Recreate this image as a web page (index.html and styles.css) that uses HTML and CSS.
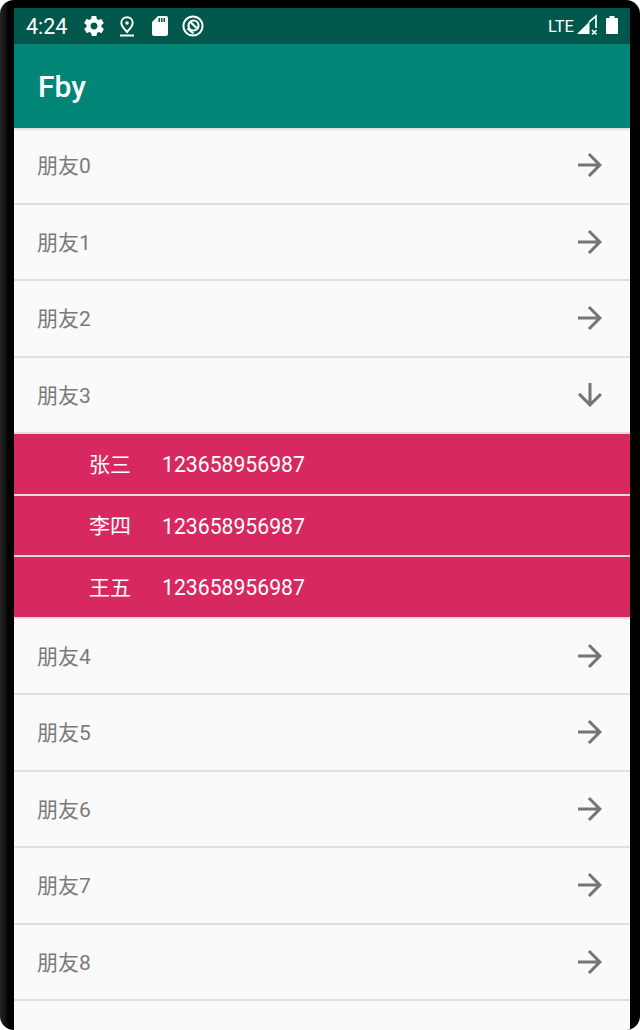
FILE: index.html
```html
<!DOCTYPE html>
<html>
<head>
    <title>Fby</title>
    <link rel="stylesheet" href="styles.css">
</head>
<body>
    <div class="device">
        <div class="screen">
            <div class="status-bar">
                <span class="time">4:24</span>
                <svg class="st-icon" viewBox="0 0 24 24"><path d="M19.400 13c0-.3.100-.6.100-1s0-.7-.1-1l2.100-1.600c.2-.2.2-.4.1-.6l-2-3.500c-.1-.2-.4-.3-.6-.2l-2.500 1c-.5-.4-1.100-.7-1.700-1l-.4-2.600C14.400 2.200 14.200 2 14 2h-4c-.2 0-.4.2-.5.4l-.4 2.600c-.6.300-1.200.6-1.700 1l-2.500-1c-.2-.1-.5 0-.6.2l-2 3.500c-.1.200-.1.400.1.600L4.600 11c0 .3-.1.700-.1 1s0 .7.1 1l-2.100 1.600c-.2.200-.2.400-.1.600l2 3.500c.1.200.4.300.6.200l2.500-1c.5.400 1.100.7 1.700 1l.4 2.600c.1.300.3.500.5.500h4c.2 0 .4-.2.5-.4l.4-2.600c.6-.3 1.200-.6 1.700-1l2.500 1c.2.100.5 0 .6-.2l2-3.500c.1-.2.100-.4-.1-.6L19.400 13zM12 15.500c-1.900 0-3.500-1.600-3.500-3.500s1.600-3.500 3.500-3.500 3.500 1.600 3.500 3.500-1.600 3.500-3.500 3.500z"/></svg>
                <svg class="st-icon" viewBox="0 0 24 24"><path class="line" d="M12 3.200c-3.300 0-5.700 2.500-5.700 5.600 0 3.500 3.500 6.900 5.700 9.200 2.200-2.300 5.700-5.700 5.700-9.200 0-3.100-2.400-5.600-5.700-5.600z"/><circle cx="12" cy="9" r="1.800"/><path class="line" d="M5 21.500h14"/></svg>
                <svg class="st-icon" viewBox="0 0 24 24"><path d="M18 2h-8L4 8v12c0 1.100.9 2 2 2h12c1.100 0 2-.9 2-2V4c0-1.100-.9-2-2-2zM12 8h-1.500V4H12v4zm2.500 0H13V4h1.500v4zm2.500 0h-1.500V4H17v4z"/></svg>
                <svg class="st-icon" viewBox="0 0 24 24"><circle class="line" cx="12" cy="12" r="9.600"/><circle class="line thick" cx="12.500" cy="11.500" r="5"/><path class="line thick" d="M9.500 8l6 6"/><path class="line thick" d="M6.500 14.500l6 5"/></svg>
                <span class="spacer"></span>
                <span class="lte">LTE</span>
                <svg class="st-icon signal" viewBox="0 0 24 24"><path d="M2 20L14.500 7.500V20z"/><path class="line thin" d="M14 8l7-6v12"/><path class="line thin" d="M17 16l4.500 4.500m0-4.500L17 20.500"/></svg>
                <svg class="st-icon battery" viewBox="0 0 24 24"><path d="M9.500 2h5v2H17c.6 0 1 .4 1 1v14c0 .6-.4 1-1 1H7c-.6 0-1-.4-1-1V5c0-.6.4-1 1-1h2.500z"/></svg>
            </div>
            <div class="app-bar">Fby</div>
            <div class="list">
                <div class="row"><span class="label">朋友0</span><svg class="arrow" viewBox="0 0 24 24"><path d="M12 4l-1.410 1.410L16.170 11H4v2h12.170l-5.580 5.590L12 20l8-8z"/></svg></div>
                <div class="row"><span class="label">朋友1</span><svg class="arrow" viewBox="0 0 24 24"><path d="M12 4l-1.410 1.410L16.170 11H4v2h12.170l-5.580 5.590L12 20l8-8z"/></svg></div>
                <div class="row"><span class="label">朋友2</span><svg class="arrow" viewBox="0 0 24 24"><path d="M12 4l-1.410 1.410L16.170 11H4v2h12.170l-5.580 5.590L12 20l8-8z"/></svg></div>
                <div class="row"><span class="label">朋友3</span><svg class="arrow" viewBox="0 0 24 24"><path d="M20 12l-1.410-1.410L13 16.170V4h-2v12.170l-5.580-5.590L4 12l8 8z"/></svg></div>
                <div class="child"><span class="name">张三</span><span class="phone">123658956987</span></div>
                <div class="child"><span class="name">李四</span><span class="phone">123658956987</span></div>
                <div class="child"><span class="name">王五</span><span class="phone">123658956987</span></div>
                <div class="row"><span class="label">朋友4</span><svg class="arrow" viewBox="0 0 24 24"><path d="M12 4l-1.410 1.410L16.170 11H4v2h12.170l-5.580 5.590L12 20l8-8z"/></svg></div>
                <div class="row"><span class="label">朋友5</span><svg class="arrow" viewBox="0 0 24 24"><path d="M12 4l-1.410 1.410L16.170 11H4v2h12.170l-5.580 5.590L12 20l8-8z"/></svg></div>
                <div class="row"><span class="label">朋友6</span><svg class="arrow" viewBox="0 0 24 24"><path d="M12 4l-1.410 1.410L16.170 11H4v2h12.170l-5.580 5.590L12 20l8-8z"/></svg></div>
                <div class="row"><span class="label">朋友7</span><svg class="arrow" viewBox="0 0 24 24"><path d="M12 4l-1.410 1.410L16.170 11H4v2h12.170l-5.580 5.590L12 20l8-8z"/></svg></div>
                <div class="row"><span class="label">朋友8</span><svg class="arrow" viewBox="0 0 24 24"><path d="M12 4l-1.410 1.410L16.170 11H4v2h12.170l-5.580 5.590L12 20l8-8z"/></svg></div>
            </div>
        </div>
    </div>
</body>
</html>
```
FILE: styles.css
```css
body {
    margin: 0;
    background-color: #fff;
    font-family: Roboto, "Noto Sans CJK SC", sans-serif;
    overflow: hidden;
}
.device {
    box-sizing: border-box;
    height: 1030px;
    padding: 8px 10px 0 14px;
    background: linear-gradient(to right, #222 0, #111 6px, #000 8px);
    border-radius: 14px;
    overflow: hidden;
}
.screen {
    height: 1022px;
    background-color: #fafafa;
    overflow: hidden;
}
.status-bar {
    display: flex;
    align-items: center;
    height: 36px;
    padding: 0 6px 0 12px;
    background-color: #00574b;
    color: #fff;
}
.time {
    font-size: 21.500px;
    margin-right: 15px;
}
.st-icon {
    fill: #fff;
    width: 24px;
    height: 24px;
    margin-right: 9px;
}
.st-icon .line {
    fill: none;
    stroke: #fff;
    stroke-width: 2;
}
.st-icon .thick {
    stroke-width: 2.200;
}
.st-icon .thin {
    stroke-width: 1.700;
}
.spacer {
    flex: 1;
}
.lte {
    font-size: 16.500px;
    margin-right: 1px;
}
.st-icon.signal {
    margin-right: 1px;
}
.st-icon.battery {
    margin-right: 0;
}
.app-bar {
    display: flex;
    align-items: center;
    height: 84px;
    padding-left: 24px;
    background-color: #008577;
    color: #fff;
    font-size: 30px;
    font-weight: 500;
    box-shadow: 0 1px 3px rgba(0, 0, 0, 0.2);
    position: relative;
}
.row {
    box-sizing: border-box;
    display: flex;
    align-items: center;
    justify-content: space-between;
    height: 76.500px;
    padding: 0 22px 0 23px;
    border-bottom: 2px solid #e0e0e0;
    color: #7a7a7a;
    font-size: 21px;
}
.label {
    margin-bottom: 2px;
}
.arrow {
    width: 36px;
    height: 36px;
    fill: #757575;
}
.child {
    box-sizing: border-box;
    display: flex;
    align-items: center;
    height: 61.500px;
    padding-left: 75px;
    border-bottom: 2px solid #dcdcdc;
    background-color: #d7285f;
    color: #fff;
    font-size: 21px;
}
.name {
    width: 73px;
    margin-bottom: 2px;
}
.phone {
    margin-top: 2px;
    font-size: 21.200px;
}
```
